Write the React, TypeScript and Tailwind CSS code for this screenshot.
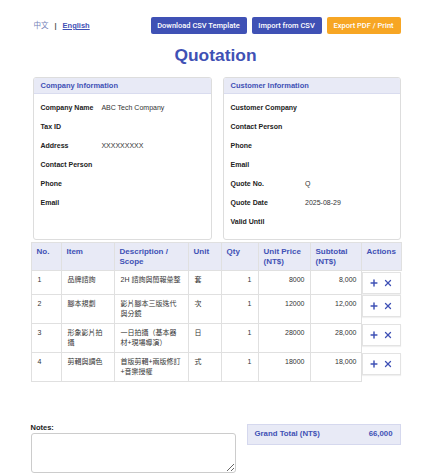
import { Plus, X } from 'lucide-react';

const company: [string, string][] = [
  ['Company Name', 'ABC Tech Company'],
  ['Tax ID', ''],
  ['Address', 'XXXXXXXXX'],
  ['Contact Person', ''],
  ['Phone', ''],
  ['Email', ''],
];

const customer: [string, string][] = [
  ['Customer Company', ''],
  ['Contact Person', ''],
  ['Phone', ''],
  ['Email', ''],
  ['Quote No.', 'Q'],
  ['Quote Date', '2025-08-29'],
  ['Valid Until', ''],
];

const items = [
  { no: 1, item: '品牌諮詢', desc: '2H 諮詢與簡報彙整', unit: '套', qty: 1, price: 8000 },
  { no: 2, item: '腳本規劃', desc: '影片腳本三版迭代與分鏡', unit: '次', qty: 1, price: 12000 },
  { no: 3, item: '形象影片拍攝', desc: '一日拍攝（基本器材+現場導演）', unit: '日', qty: 1, price: 28000 },
  { no: 4, item: '剪輯與調色', desc: '首版剪輯+兩版修訂+音樂授權', unit: '式', qty: 1, price: 18000 },
];

const font = { fontFamily: '"Liberation Sans", Arial, "Noto Sans CJK TC", sans-serif' };
const btnFont = { fontFamily: 'Roboto, "Liberation Sans", sans-serif' };

function InfoCard({ title, rows }: { title: string; rows: [string, string][] }) {
  return (
    <div className="border border-[#dddddd] rounded-[3px] bg-white overflow-hidden">
      <div className="h-[16px] px-[7px] flex items-center bg-[#e8eaf6] border-b border-[#d9dcef] text-[7.5px] font-bold text-[#3f51b5]">
        {title}
      </div>
      <div className="px-[7px] pt-[5px] pb-[7px] grid grid-cols-[auto_1fr] gap-x-[8px]">
        {rows.map(([label, value]) => (
          <div key={label} className="contents">
            <div className="h-[19px] flex items-center text-[7px] font-bold text-[#222]">{label}</div>
            <div className="h-[19px] flex items-center text-[7px] text-[#333]">{value}</div>
          </div>
        ))}
      </div>
    </div>
  );
}

export default function App() {
  const total = items.reduce((s, i) => s + i.qty * i.price, 0);
  const th = 'border border-[#e0e0e0] bg-[#e8eaf6] px-[5px] py-[3.5px] text-left align-top text-[8px] leading-[10px] font-bold text-[#3f51b5]';
  const td = 'border border-[#e0e0e0] px-[6px] py-[4px] align-top text-[7px] leading-[10px] text-[#333]';

  return (
    <div className="min-h-[476px] bg-white" style={font}>
      <div className="w-[370px] mx-auto pt-[17px]">
        {/* Top bar */}
        <div className="flex items-center justify-between">
          <div className="pl-[3px] flex items-center gap-[6px] text-[7.5px]">
            <span className="text-[#7481b8]">中文</span>
            <span className="text-[#555] font-bold">|</span>
            <span className="text-[#3f51b5] font-bold underline">English</span>
          </div>
          <div className="flex items-center gap-[5px]" style={btnFont}>
            <button className="h-[17px] w-[96px] rounded-[2px] bg-[#3f51b5] text-white text-[7.5px] font-medium">Download CSV Template</button>
            <button className="h-[17px] w-[70px] rounded-[2px] bg-[#3f51b5] text-white text-[7.5px] font-medium">Import from CSV</button>
            <button className="h-[17px] w-[74px] rounded-[2px] bg-[#f7a624] text-white text-[7.5px] font-medium">Export PDF / Print</button>
          </div>
        </div>

        <h1 className="mt-[11px] mb-[12px] text-center text-[17.4px] leading-[20px] font-bold text-[#3f51b5]">Quotation</h1>

        {/* Info cards */}
        <div className="ml-[2px] grid grid-cols-[179px_178px] gap-[11px]">
          <InfoCard title="Company Information" rows={company} />
          <InfoCard title="Customer Information" rows={customer} />
        </div>

        {/* Items table */}
        <table className="mt-[2px] w-[370px] table-fixed border-collapse">
          <colgroup>
            <col className="w-[30px]" />
            <col className="w-[53px]" />
            <col className="w-[74px]" />
            <col className="w-[33px]" />
            <col className="w-[37px]" />
            <col className="w-[52px]" />
            <col className="w-[51px]" />
            <col className="w-[40px]" />
          </colgroup>
          <thead>
            <tr>
              <th className={th}>No.</th>
              <th className={th}>Item</th>
              <th className={th}>Description / Scope</th>
              <th className={th}>Unit</th>
              <th className={th}>Qty</th>
              <th className={th}>Unit Price (NT$)</th>
              <th className={th}>Subtotal (NT$)</th>
              <th className={th}>Actions</th>
            </tr>
          </thead>
          <tbody>
            {items.map((r) => (
              <tr key={r.no}>
                <td className={td}>{r.no}</td>
                <td className={td}>{r.item}</td>
                <td className={td}>{r.desc}</td>
                <td className={td}>{r.unit}</td>
                <td className={`${td} text-right`}>{r.qty}</td>
                <td className={`${td} text-right pr-[5px]`}>{r.price}</td>
                <td className={`${td} text-right pr-[4px]`}>{(r.qty * r.price).toLocaleString('en-US')}</td>
                <td className="p-0 align-top">
                  <div className="mt-[1px] h-[22px] border border-[#e3e3e3] bg-white shadow-[0_1px_1px_rgba(0,0,0,0.06)] flex items-center justify-center gap-[4px] text-[#3f51b5]">
                    <Plus size={10} strokeWidth={3.5} />
                    <X size={10} strokeWidth={3} />
                  </div>
                </td>
              </tr>
            ))}
          </tbody>
        </table>

        {/* Notes & total */}
        <div className="mt-[41px] grid grid-cols-[205px_154px] gap-[11px] items-start">
          <div>
            <div className="text-[7.5px] leading-[9px] font-bold text-[#222]">Notes:</div>
            <textarea className="mt-[1px] block w-full h-[40px] border border-[#cccccc] rounded-[3px] bg-white" />
          </div>
          <div className="mt-[1px] h-[21px] px-[7px] flex items-center justify-between bg-[#e8eaf6] border border-[#d5d8ee] text-[7.8px] font-bold text-[#3f51b5]">
            <span>Grand Total (NT$)</span>
            <span>{total.toLocaleString('en-US')}</span>
          </div>
        </div>
      </div>
    </div>
  );
}
